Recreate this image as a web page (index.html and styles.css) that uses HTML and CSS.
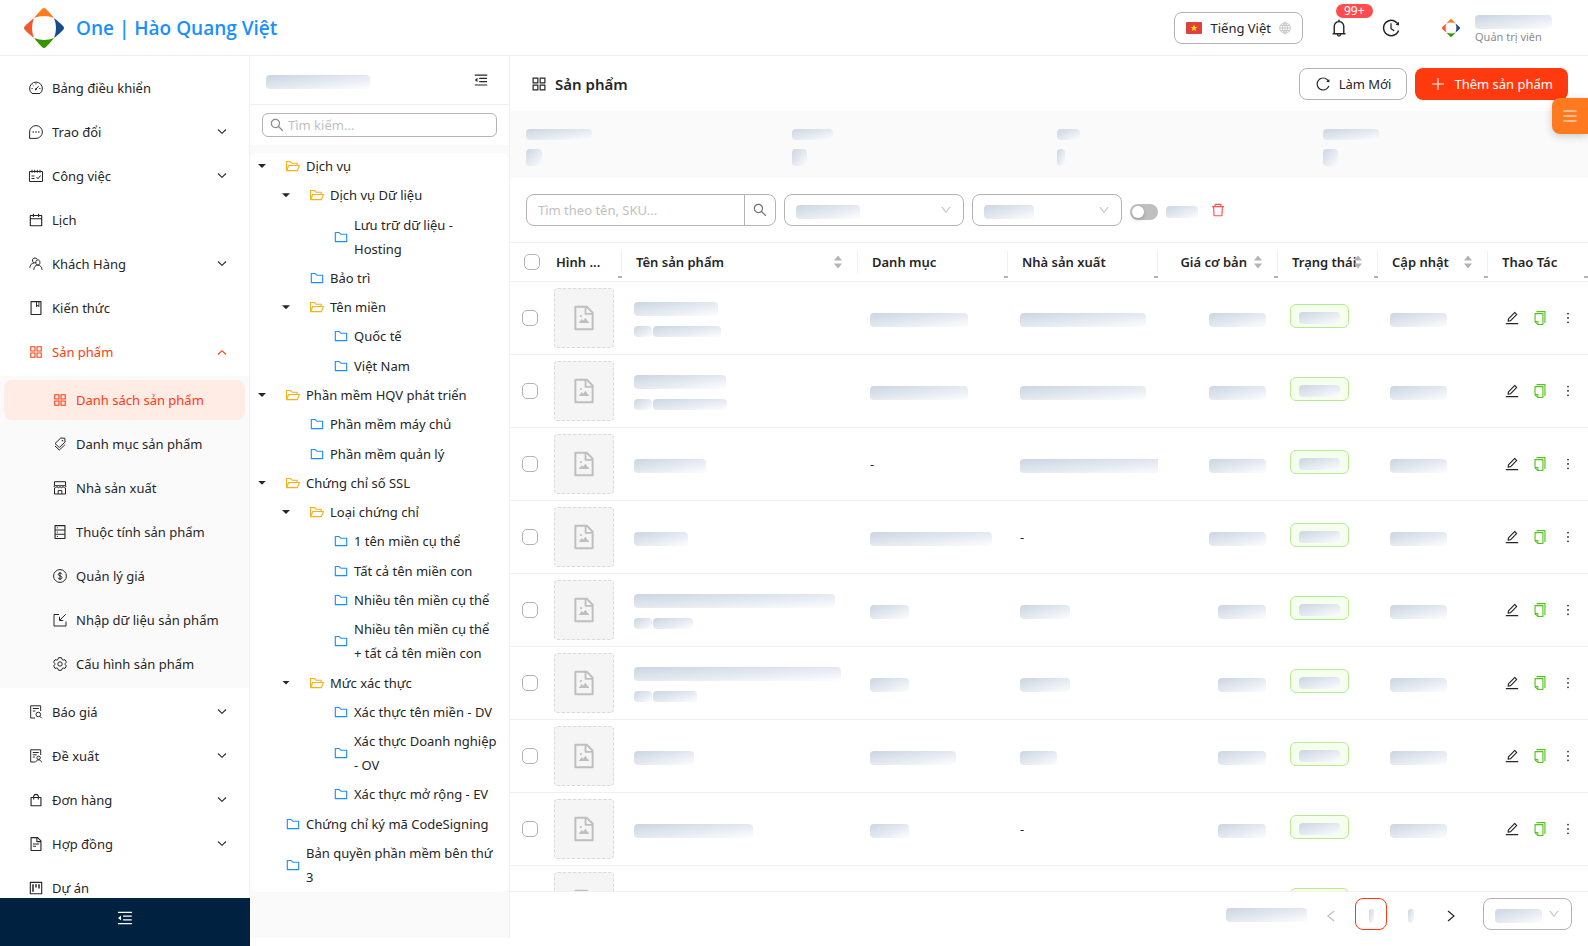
FILE: index.html
```html
<!DOCTYPE html>
<html lang="vi">
<head>
  <meta charset="UTF-8">
  <meta name="viewport" content="width=device-width, initial-scale=1.0">
  <title>Sản phẩm - One | Hào Quang Việt</title>
  <link rel="stylesheet" href="styles.css">
</head>
<body>

  <!-- Icon dùng chung -->
  <svg class="sprite" aria-hidden="true">
    <symbol id="i-logo" viewBox="0 0 40 40">
      <path fill="#ff7a1c" d="M10 10 C13 6 16 3 18 1 Q20 -1 22 1 C24 3 27 6 30 10 Q20 6 10 10Z"/>
      <path fill="#1b4b87" d="M10 10 C13 6 16 3 18 1 Q20 -1 22 1 C24 3 27 6 30 10 Q20 6 10 10Z" transform="rotate(90 20 20)"/>
      <path fill="#379300" d="M10 10 C13 6 16 3 18 1 Q20 -1 22 1 C24 3 27 6 30 10 Q20 6 10 10Z" transform="rotate(180 20 20)"/>
      <path fill="#f4582e" d="M10 10 C13 6 16 3 18 1 Q20 -1 22 1 C24 3 27 6 30 10 Q20 6 10 10Z" transform="rotate(270 20 20)"/>
    </symbol>
    <symbol id="i-appstore" viewBox="0 0 1024 1024"><path d="M464 144H160c-8.800 0-16 7.200-16 16v304c0 8.800 7.200 16 16 16h304c8.800 0 16-7.200 16-16V160c0-8.800-7.200-16-16-16zm-52 268H212V212h200v200zm452-268H560c-8.800 0-16 7.200-16 16v304c0 8.800 7.200 16 16 16h304c8.800 0 16-7.200 16-16V160c0-8.800-7.200-16-16-16zm-52 268H612V212h200v200zM464 544H160c-8.800 0-16 7.200-16 16v304c0 8.800 7.200 16 16 16h304c8.800 0 16-7.200 16-16V560c0-8.800-7.200-16-16-16zm-52 268H212V612h200v200zm452-268H560c-8.800 0-16 7.200-16 16v304c0 8.800 7.200 16 16 16h304c8.800 0 16-7.200 16-16V560c0-8.800-7.200-16-16-16zm-52 268H612V612h200v200z"/></symbol>
    <symbol id="i-fold" viewBox="0 0 1024 1024"><path d="M408 442h480c4.400 0 8-3.600 8-8v-56c0-4.400-3.600-8-8-8H408c-4.400 0-8 3.600-8 8v56c0 4.400 3.600 8 8 8zm-8 204c0 4.400 3.600 8 8 8h480c4.400 0 8-3.600 8-8v-56c0-4.400-3.600-8-8-8H408c-4.400 0-8 3.600-8 8v56zm504-486H120c-4.400 0-8 3.600-8 8v56c0 4.400 3.600 8 8 8h784c4.400 0 8-3.600 8-8v-56c0-4.400-3.600-8-8-8zm0 632H120c-4.400 0-8 3.600-8 8v56c0 4.400 3.600 8 8 8h784c4.400 0 8-3.600 8-8v-56c0-4.400-3.600-8-8-8zM115.400 518.900L271.700 642c5.800 4.600 14.400.5 14.400-6.900V388.900c0-7.400-8.500-11.500-14.400-6.900L115.400 505.100a8.740 8.740 0 000 13.800z"/></symbol>
    <symbol id="i-search" viewBox="0 0 1024 1024"><path d="M909.600 854.500L649.900 594.800C690.200 542.700 712 479 712 412c0-80.200-31.300-155.400-87.900-212.100-56.600-56.700-132-87.900-212.100-87.900s-155.500 31.300-212.100 87.900C143.200 256.500 112 331.800 112 412c0 80.100 31.300 155.500 87.900 212.100C256.500 680.800 331.800 712 412 712c67 0 130.600-21.800 182.700-62l259.700 259.600a8.200 8.200 0 0011.600 0l43.600-43.500a8.200 8.200 0 000-11.600zM570.400 570.400C528 612.700 471.800 636 412 636s-116-23.300-158.400-65.600C211.300 528 188 471.800 188 412s23.300-116.100 65.600-158.400C296 211.300 352.200 188 412 188s116.100 23.200 158.400 65.600S636 352.200 636 412s-23.300 116.100-65.600 158.400z"/></symbol>
    <symbol id="i-folder" viewBox="0 0 1024 1024"><path d="M880 298.400H521L403.700 186.200a8.150 8.150 0 00-5.500-2.200H144c-17.700 0-32 14.300-32 32v592c0 17.700 14.300 32 32 32h736c17.700 0 32-14.300 32-32V330.400c0-17.700-14.300-32-32-32zM840 768H184V256h188.500l119.600 114.400H840V768z"/></symbol>
    <symbol id="i-open" viewBox="0 0 1024 1024"><path d="M928 444H820V330.400c0-17.700-14.300-32-32-32H473L355.700 186.200a8.150 8.150 0 00-5.500-2.200H96c-17.700 0-32 14.300-32 32v592c0 17.700 14.300 32 32 32h698c13 0 24.800-7.900 29.700-20l134-332c1.500-3.800 2.300-7.900 2.300-12 0-17.700-14.300-32-32-32zM136 256h188.500l119.600 114.400H748V444H238c-13 0-24.800 7.900-29.700 20L136 643.200V256zm635.300 512H159l103.300-256h612.400L771.300 768z"/></symbol>
    <symbol id="i-down" viewBox="0 0 1024 1024"><path d="M884 256h-75c-5.100 0-9.900 2.500-12.900 6.600L512 654.200 227.900 262.600c-3-4.100-7.800-6.600-12.900-6.600h-75c-6.500 0-10.300 7.400-6.500 12.700l352.600 486.100c12.800 17.600 39 17.600 51.700 0l352.600-486.100c3.900-5.300.1-12.700-6.400-12.700z"/></symbol>
    <symbol id="i-edit" viewBox="0 0 1024 1024"><path d="M257.700 752c2 0 4-.2 6-.5L431.900 722c2-.4 3.900-1.300 5.300-2.800l423.900-423.900a9.960 9.960 0 000-14.100L694.900 114.900c-1.900-1.900-4.400-2.900-7.100-2.900s-5.200 1-7.100 2.900L256.800 538.800c-1.500 1.500-2.400 3.300-2.800 5.300l-29.500 168.200a33.500 33.500 0 009.400 29.800c6.600 6.400 14.900 9.900 23.800 9.900zm67.400-174.400L687.800 215l73.300 73.300-362.700 362.600-88.900 15.700 15.600-89zM880 836H144c-17.700 0-32 14.300-32 32v36c0 4.400 3.600 8 8 8h784c4.400 0 8-3.600 8-8v-36c0-17.700-14.300-32-32-32z"/></symbol>
    <symbol id="i-copy" viewBox="0 0 1024 1024"><path d="M832 64H296c-4.400 0-8 3.600-8 8v56c0 4.400 3.600 8 8 8h496v688c0 4.400 3.600 8 8 8h56c4.400 0 8-3.600 8-8V96c0-17.700-14.300-32-32-32zM704 192H192c-17.700 0-32 14.300-32 32v530.700c0 8.500 3.400 16.600 9.400 22.600l173.300 173.300c2.200 2.200 4.700 4 7.400 5.500v1.900h4.200c3.500 1.300 7.200 2 11 2H704c17.700 0 32-14.300 32-32V224c0-17.700-14.300-32-32-32zM350 856.200L263.900 770H350v86.200zM664 888H414V746c0-22.100-17.900-40-40-40H232V264h432v624z"/></symbol>
    <symbol id="i-more" viewBox="0 0 1024 1024"><path d="M456 231a56 56 0 10112 0 56 56 0 10-112 0zm0 280a56 56 0 10112 0 56 56 0 10-112 0zm0 280a56 56 0 10112 0 56 56 0 10-112 0z"/></symbol>
    <symbol id="i-delete" viewBox="0 0 1024 1024"><path d="M360 184h-8c4.400 0 8-3.600 8-8v8h304v-8c0 4.400 3.600 8 8 8h-8v72h72v-80c0-35.300-28.700-64-64-64H352c-35.300 0-64 28.700-64 64v80h72v-72zm504 72H160c-17.700 0-32 14.300-32 32v32c0 4.400 3.600 8 8 8h60.400l24.700 523c1.600 34.100 29.800 61 63.900 61h454c34.200 0 62.300-26.800 63.900-61l24.700-523H888c4.400 0 8-3.600 8-8v-32c0-17.700-14.300-32-32-32zM731.300 840H292.700l-24.200-512h487l-24.200 512z"/></symbol>
    <symbol id="i-image" viewBox="0 0 1024 1024"><path d="M553.100 509.100l-77.800 99.200-41.100-52.400a8 8 0 00-12.600 0l-99.800 127.200a7.980 7.980 0 006.300 12.900H696c6.700 0 10.400-7.700 6.300-12.900l-136.500-174a8.100 8.100 0 00-12.700 0zM360 442a40 40 0 1080 0 40 40 0 10-80 0zm494.600-153.400L639.400 73.400c-6-6-14.100-9.400-22.600-9.400H192c-17.700 0-32 14.300-32 32v832c0 17.700 14.300 32 32 32h640c17.700 0 32-14.300 32-32V311.300c0-8.500-3.400-16.700-9.400-22.700zM790.200 326H602V137.800L790.200 326zm1.800 562H232V136h302v216a42 42 0 0042 42h216v494z"/></symbol>
    <symbol id="i-filetext" viewBox="0 0 1024 1024"><path d="M854.600 288.600L639.400 73.400c-6-6-14.100-9.400-22.600-9.400H192c-17.700 0-32 14.300-32 32v832c0 17.700 14.300 32 32 32h640c17.700 0 32-14.300 32-32V311.300c0-8.500-3.400-16.700-9.400-22.700zM790.200 326H602V137.800L790.200 326zm1.800 562H232V136h302v216a42 42 0 0042 42h216v494zM504 618H320c-4.400 0-8 3.600-8 8v48c0 4.400 3.600 8 8 8h184c4.400 0 8-3.600 8-8v-48c0-4.400-3.600-8-8-8zM312 490v48c0 4.400 3.600 8 8 8h384c4.400 0 8-3.600 8-8v-48c0-4.400-3.600-8-8-8H320c-4.400 0-8 3.600-8 8z"/></symbol>
    <symbol id="i-bag" viewBox="0 0 1024 1024"><path d="M832 312H696v-16c0-101.600-82.400-184-184-184s-184 82.400-184 184v16H192c-17.700 0-32 14.300-32 32v536c0 17.700 14.300 32 32 32h640c17.700 0 32-14.300 32-32V344c0-17.700-14.300-32-32-32zm-432-16c0-61.900 50.100-112 112-112s112 50.100 112 112v16H400v-16zm392 544H232V384h96v88c0 4.400 3.600 8 8 8h56c4.400 0 8-3.600 8-8v-88h224v88c0 4.400 3.600 8 8 8h56c4.400 0 8-3.600 8-8v-88h96v456z"/></symbol>
    <symbol id="i-calendar" viewBox="0 0 1024 1024"><path d="M880 184H712v-64c0-4.400-3.600-8-8-8h-56c-4.400 0-8 3.600-8 8v64H384v-64c0-4.400-3.600-8-8-8h-56c-4.400 0-8 3.600-8 8v64H144c-17.700 0-32 14.300-32 32v664c0 17.700 14.300 32 32 32h736c17.700 0 32-14.300 32-32V216c0-17.700-14.300-32-32-32zm-40 656H184V460h656v380zM184 392V256h128v48c0 4.400 3.600 8 8 8h56c4.400 0 8-3.600 8-8v-48h256v48c0 4.400 3.600 8 8 8h56c4.400 0 8-3.600 8-8v-48h128v136H184z"/></symbol>
    <symbol id="i-book" viewBox="0 0 1024 1024"><path d="M832 64H192c-17.700 0-32 14.300-32 32v832c0 17.700 14.300 32 32 32h640c17.700 0 32-14.300 32-32V96c0-17.700-14.300-32-32-32zm-260 72h96v209.900L621.500 312 572 347.400V136zm220 752H232V136h280v296.900c0 3.300 1 6.600 3 9.300a15.900 15.900 0 0022.300 3.700l83.800-59.900 81.400 59.400c2.700 2 6 3.100 9.400 3.100 8.800 0 16-7.200 16-16V136h64v752z"/></symbol>
    <symbol id="i-project" viewBox="0 0 1024 1024"><path d="M280 752h80c4.400 0 8-3.600 8-8V280c0-4.400-3.600-8-8-8h-80c-4.400 0-8 3.600-8 8v464c0 4.400 3.600 8 8 8zm192-280h80c4.400 0 8-3.600 8-8V280c0-4.400-3.600-8-8-8h-80c-4.400 0-8 3.600-8 8v184c0 4.400 3.600 8 8 8zm192 72h80c4.400 0 8-3.600 8-8V280c0-4.400-3.600-8-8-8h-80c-4.400 0-8 3.600-8 8v256c0 4.400 3.600 8 8 8zm216-432H144c-17.700 0-32 14.300-32 32v736c0 17.700 14.300 32 32 32h736c17.700 0 32-14.300 32-32V144c0-17.700-14.300-32-32-32zm-40 728H184V184h656v656z"/></symbol>
    <symbol id="i-database" viewBox="0 0 1024 1024"><path d="M832 64H192c-17.700 0-32 14.300-32 32v832c0 17.700 14.300 32 32 32h640c17.700 0 32-14.300 32-32V96c0-17.700-14.300-32-32-32zm-600 72h560v208H232V136zm560 480H232V408h560v208zm0 272H232V680h560v208zM304 240a40 40 0 1080 0 40 40 0 10-80 0zm0 272a40 40 0 1080 0 40 40 0 10-80 0zm0 272a40 40 0 1080 0 40 40 0 10-80 0z"/></symbol>
    <symbol id="i-bell" viewBox="0 0 1024 1024"><path d="M816 768h-24V428c0-141.100-104.300-257.700-240-277.100V112c0-22.100-17.900-40-40-40s-40 17.900-40 40v38.900c-135.700 19.400-240 136-240 277.100v340h-24c-17.700 0-32 14.300-32 32v32c0 4.400 3.600 8 8 8h216c0 61.800 50.200 112 112 112s112-50.200 112-112h216c4.400 0 8-3.600 8-8v-32c0-17.700-14.300-32-32-32zM512 888c-26.500 0-48-21.500-48-48h96c0 26.500-21.500 48-48 48zM304 768V428c0-55.600 21.600-107.800 60.900-147.100S456.400 220 512 220c55.600 0 107.800 21.600 147.100 60.900S720 372.400 720 428v340H304z"/></symbol>
    <symbol id="i-reload" viewBox="0 0 1024 1024"><path d="M909.100 209.300l-56.400 44.100C775.800 155.100 656.200 92 521.900 92 290 92 102.300 279.500 102 511.500 101.700 743.700 289.800 932 521.900 932c181.300 0 335.800-115 394.600-276.100 1.500-4.200-.7-8.900-4.900-10.300l-56.700-19.500a8 8 0 00-10.100 4.800c-1.800 5-3.800 10-5.900 14.900-17.300 41-42.100 77.800-73.700 109.400A344.770 344.770 0 01655.900 829c-42.300 17.900-87.400 27-133.800 27-46.500 0-91.500-9.100-133.800-27A341.500 341.500 0 01279 755.200a342.160 342.160 0 01-73.700-109.400c-17.900-42.400-27-87.400-27-133.900s9.100-91.500 27-133.900c17.300-41 42.100-77.800 73.700-109.400 31.600-31.600 68.400-56.400 109.300-73.800 42.300-17.900 87.400-27 133.800-27 46.500 0 91.500 9.100 133.800 27a341.500 341.500 0 01109.300 73.800c9.900 9.900 19.200 20.400 27.800 31.400l-60.200 47a8 8 0 003 14.100l175.600 43c5 1.200 9.900-2.600 9.900-7.700l.8-180.900c-.1-6.600-7.800-10.300-13-6.200z"/></symbol>
    <symbol id="i-history" viewBox="0 0 1024 1024"><path d="M536.100 273H488c-4.400 0-8 3.600-8 8v275.300c0 2.600 1.200 5 3.300 6.500l165.300 120.700c3.600 2.600 8.600 1.900 11.200-1.700l28.600-39c2.700-3.700 1.900-8.700-1.700-11.200L544.100 528.500V281c0-4.400-3.600-8-8-8zm219.800 75.200l156.800 38.300c5 1.200 9.900-2.600 9.900-7.700l.8-161.500c0-6.700-7.700-10.500-12.900-6.300L752.900 334.100a8 8 0 003 14.100zm167.700 301.100l-56.700-19.500a8 8 0 00-10.100 4.800c-1.900 5.100-3.900 10.100-6 15.100-17.800 42.100-43.300 80-75.900 112.500a353 353 0 01-112.500 75.900 352.180 352.180 0 01-137.700 27.800c-47.800 0-94.100-9.300-137.700-27.800a353 353 0 01-112.500-75.900c-32.500-32.500-58-70.400-75.900-112.500A353.440 353.440 0 01171 512c0-47.800 9.300-94.200 27.800-137.800 17.800-42.100 43.300-80 75.900-112.500a353 353 0 01112.500-75.900C430.600 167.300 477 158 524.800 158s94.100 9.300 137.700 27.800A353 353 0 01775 261.700c10.200 10.300 19.800 21 28.600 32.300l59.800-46.800C784.700 146.600 662.200 81.900 524.600 82 285 82.100 92.600 276.700 95 516.400 97.400 751.900 288.900 942 524.800 942c185.500 0 343.500-117.600 403.700-282.300 1.500-4.200-.7-8.900-4.900-10.400z"/></symbol>
    <symbol id="i-dashboard" viewBox="-1 -1 16 16"><path fill="none" stroke="currentColor" d="M3 12.500A6.400 6.400 0 1 1 11 12.500ZM7 8l2.500-2.800M2.500 7.500h1.200M10.300 7.500h1.200M7 2.200v1.200M3.600 4l.9.9"/><circle cx="6.800" cy="8.200" r="1"/></symbol>
    <symbol id="i-message" viewBox="-1 -1 16 16"><path fill="none" stroke="currentColor" d="M.6 13.400V7A6.400 6.400 0 1 1 7 13.400Z"/><circle cx="4.200" cy="7" r=".8"/><circle cx="7" cy="7" r=".8"/><circle cx="9.800" cy="7" r=".8"/></symbol>
    <symbol id="i-schedule" viewBox="-1 -1 16 16"><path fill="none" stroke="currentColor" d="M.5 2.500h13v10H.5ZM3 .8v3M5.700.8v3M8.300.8v3M11 .8v3M2.500 7h3M2.500 9.500h3M7.500 8l1.500 1.800 2.500-3.300"/></symbol>
    <symbol id="i-team" viewBox="-1 -1 16 16"><path fill="none" stroke="currentColor" d="M7 5.500a2 2 0 1 0 3.800 0 2 2 0 1 0-3.800 0M4.700 12.800C5 10 6.500 8 8.800 8s4 2 4.300 4.800M6.700 5.800A2.500 2.500 0 1 1 8.200 2.500M.8 10.800C1 8.300 2.500 6 5 6"/></symbol>
    <symbol id="i-tags" viewBox="-1 -1 16 16"><path fill="none" stroke="currentColor" d="M7.800 1l4 .3.300 3.700L6.300 10.500 2 6.500ZM2 9l4.300 4 5.600-5.200"/><circle cx="9.500" cy="3.800" r=".8"/></symbol>
    <symbol id="i-shop" viewBox="-1 -1 16 16"><path fill="none" stroke="currentColor" d="M1.500.7h11v4h-11ZM1 4.700C1 7 3.500 7.200 4 5.500c.5 1.700 2.500 1.700 3 0 .5 1.700 2.500 1.700 3 0 .5 1.700 3 1.500 3-.8M1.500 7v6h11V7M5.200 13v-3.500h3.600V13"/></symbol>
    <symbol id="i-dollar" viewBox="-1 -1 16 16"><path fill="none" stroke="currentColor" d="M.6 7a6.400 6.400 0 1 0 12.800 0A6.400 6.400 0 1 0 .6 7M8.900 5.200C8.700 3.600 5.200 3.600 5.200 5.400 5.200 7.200 9 6.500 9 8.500c0 2-3.800 2-4 .2M7 3v8"/></symbol>
    <symbol id="i-import" viewBox="-1 -1 16 16"><path fill="none" stroke="currentColor" d="M6 1.500H1v11.500h12V8.500M12.800 1.200L7 7M6.500 3.800v3.700h3.700"/></symbol>
    <symbol id="i-setting" viewBox="-1 -1 16 16"><path fill="none" stroke="currentColor" stroke-linejoin="round" d="M5.500.7h3l.5 1.700 1.200.7 1.800-.4 1.400 2.500L12.200 6.500v1.200l1.200 1.200-1.400 2.500-1.800-.4-1.200.7-.5 1.600h-3L5 11.700 3.800 11l-1.800.4L.6 8.900l1.200-1.200V6.500L.6 5.200 2 2.700l1.800.4L5 2.400Z"/><circle cx="7" cy="7" r="2.200" fill="none" stroke="currentColor"/></symbol>
    <symbol id="i-filesearch" viewBox="-1 -1 16 16"><path fill="none" stroke="currentColor" d="M6 13H1.700V.8h10V6M3.800 3.500h6M3.800 6h2.500M10.800 11.200L12.800 13.300"/><circle cx="9.300" cy="9.500" r="2.300" fill="none" stroke="currentColor"/></symbol>
    <symbol id="i-audit" viewBox="-1 -1 16 16"><path fill="none" stroke="currentColor" d="M6 13H1.700V.8h10V6M3.800 3.500h6M3.800 5.800h4M3.800 8h2M6.700 13.300c.3-3.200 5.500-3.200 5.800 0"/><circle cx="9.600" cy="8.800" r="1.700" fill="none" stroke="currentColor"/></symbol>
    <symbol id="i-global" viewBox="0 0 14 14"><path fill="none" stroke="currentColor" d="M.8 7a6.200 6.200 0 1 0 12.400 0A6.200 6.200 0 1 0 .8 7M7 .8v12.400M.8 7h12.400M1.800 4h10.400M1.800 10h10.400M7 .8c-4 3-4 9.400 0 12.400M7 .8c4 3 4 9.400 0 12.400"/></symbol>
    <symbol id="i-chevron" viewBox="0 0 10 10"><path fill="none" stroke="currentColor" stroke-width="1.100" d="M1 2.500l4 3.800 4-3.800"/></symbol>
    <symbol id="i-left" viewBox="0 0 12 12"><path fill="none" stroke="currentColor" stroke-width="1.200" d="M9 1L3 6l6 5"/></symbol>
    <symbol id="i-right" viewBox="0 0 12 12"><path fill="none" stroke="currentColor" stroke-width="1.200" d="M3 1l6 5-6 5"/></symbol>
    <symbol id="i-plus" viewBox="-1 -1 16 16"><path fill="none" stroke="currentColor" d="M7 1v12M1 7h12"/></symbol>
    <symbol id="i-menu" viewBox="-1 -1 16 16"><path fill="none" stroke="currentColor" stroke-width="1.200" d="M.5 2h13M.5 7h13M.5 12h13"/></symbol>
  </svg>

  <header class="header">
    <a class="brand" href="#">
      <svg class="brand-logo" aria-hidden="true"><use href="#i-logo"/></svg>
      <span>One | Hào Quang Việt</span>
    </a>
    <div class="header-right">
      <button type="button" class="btn lang">
        <svg class="flag" viewBox="0 0 16 12" aria-hidden="true"><rect width="16" height="12" rx="1" fill="#e0403c"/><path fill="#ffe600" d="M8 2.500l.9 2.500h2.600L9.400 6.600l.8 2.600L8 7.600 5.800 9.200l.8-2.600L4.500 5h2.600z"/></svg>
        Tiếng Việt
        <svg class="globe" aria-hidden="true"><use href="#i-global"/></svg>
      </button>
      <button type="button" class="icon-btn bell" aria-label="Thông báo">
        <svg class="icon-lg" aria-hidden="true"><use href="#i-bell"/></svg>
        <span class="badge">99+</span>
      </button>
      <button type="button" class="icon-btn history" aria-label="Lịch sử">
        <svg class="icon-lg" aria-hidden="true"><use href="#i-history"/></svg>
      </button>
      <div class="user">
        <svg class="avatar" aria-hidden="true"><use href="#i-logo"/></svg>
        <div class="user-info">
          <span class="sk" style="width: 77px"></span>
          <span class="role">Quản trị viên</span>
        </div>
      </div>
    </div>
  </header>

  <div class="layout">
    <aside class="sider">
      <nav class="menu">
        <a class="menu-item" href="#"><svg class="icon"><use href="#i-dashboard"/></svg>Bảng điều khiển</a>
        <a class="menu-item" href="#"><svg class="icon"><use href="#i-message"/></svg>Trao đổi<svg class="arrow"><use href="#i-chevron"/></svg></a>
        <a class="menu-item" href="#"><svg class="icon"><use href="#i-schedule"/></svg>Công việc<svg class="arrow"><use href="#i-chevron"/></svg></a>
        <a class="menu-item" href="#"><svg class="icon"><use href="#i-calendar"/></svg>Lịch</a>
        <a class="menu-item" href="#"><svg class="icon"><use href="#i-team"/></svg>Khách Hàng<svg class="arrow"><use href="#i-chevron"/></svg></a>
        <a class="menu-item" href="#"><svg class="icon"><use href="#i-book"/></svg>Kiến thức</a>
        <a class="menu-item active" href="#"><svg class="icon"><use href="#i-appstore"/></svg>Sản phẩm<svg class="arrow up"><use href="#i-chevron"/></svg></a>
        <div class="submenu">
          <a class="menu-item selected" href="#"><svg class="icon"><use href="#i-appstore"/></svg>Danh sách sản phẩm</a>
          <a class="menu-item" href="#"><svg class="icon"><use href="#i-tags"/></svg>Danh mục sản phẩm</a>
          <a class="menu-item" href="#"><svg class="icon"><use href="#i-shop"/></svg>Nhà sản xuất</a>
          <a class="menu-item" href="#"><svg class="icon"><use href="#i-database"/></svg>Thuộc tính sản phẩm</a>
          <a class="menu-item" href="#"><svg class="icon"><use href="#i-dollar"/></svg>Quản lý giá</a>
          <a class="menu-item" href="#"><svg class="icon"><use href="#i-import"/></svg>Nhập dữ liệu sản phẩm</a>
          <a class="menu-item" href="#"><svg class="icon"><use href="#i-setting"/></svg>Cấu hình sản phẩm</a>
        </div>
        <a class="menu-item" href="#"><svg class="icon"><use href="#i-filesearch"/></svg>Báo giá<svg class="arrow"><use href="#i-chevron"/></svg></a>
        <a class="menu-item" href="#"><svg class="icon"><use href="#i-audit"/></svg>Đề xuất<svg class="arrow"><use href="#i-chevron"/></svg></a>
        <a class="menu-item" href="#"><svg class="icon"><use href="#i-bag"/></svg>Đơn hàng<svg class="arrow"><use href="#i-chevron"/></svg></a>
        <a class="menu-item" href="#"><svg class="icon"><use href="#i-filetext"/></svg>Hợp đồng<svg class="arrow"><use href="#i-chevron"/></svg></a>
        <a class="menu-item" href="#"><svg class="icon"><use href="#i-project"/></svg>Dự án</a>
      </nav>
      <button type="button" class="sider-trigger" aria-label="Thu gọn menu"><svg class="icon-md"><use href="#i-fold"/></svg></button>
    </aside>

    <section class="panel">
      <div class="panel-head">
        <span class="sk" style="width: 104px"></span>
        <button type="button" class="icon-btn" aria-label="Thu gọn danh mục"><svg class="icon"><use href="#i-fold"/></svg></button>
      </div>
      <div class="panel-search">
        <label class="search-small">
          <svg class="icon" aria-hidden="true"><use href="#i-search"/></svg>
          <input type="text" placeholder="Tìm kiếm..." aria-label="Tìm kiếm">
        </label>
      </div>
      <ul class="tree" id="tree"></ul>
    </section>

    <main class="main">
      <div class="page-head">
        <h1><svg class="icon-md" aria-hidden="true"><use href="#i-appstore"/></svg>Sản phẩm</h1>
        <div class="actions">
          <button type="button" class="btn"><svg class="icon"><use href="#i-reload"/></svg>Làm Mới</button>
          <button type="button" class="btn primary"><svg class="icon"><use href="#i-plus"/></svg>Thêm sản phẩm</button>
        </div>
      </div>

      <div class="stats">
        <div class="stat"><span class="sk small" style="width: 66px"></span><span class="sk big" style="width: 16px"></span></div>
        <div class="stat"><span class="sk small" style="width: 41px"></span><span class="sk big" style="width: 15px"></span></div>
        <div class="stat"><span class="sk small" style="width: 23px"></span><span class="sk big" style="width: 8px"></span></div>
        <div class="stat"><span class="sk small" style="width: 56px"></span><span class="sk big" style="width: 15px"></span></div>
      </div>

      <div class="filters">
        <div class="search-group">
          <input type="text" placeholder="Tìm theo tên, SKU..." aria-label="Tìm theo tên, SKU">
          <button type="button" aria-label="Tìm"><svg class="icon"><use href="#i-search"/></svg></button>
        </div>
        <div class="select category">
          <select aria-label="Danh mục"><option></option></select>
          <span class="sk" style="width: 64px"></span>
          <svg class="select-arrow"><use href="#i-down"/></svg>
        </div>
        <div class="select maker">
          <select aria-label="Nhà sản xuất"><option></option></select>
          <span class="sk" style="width: 50px"></span>
          <svg class="select-arrow"><use href="#i-down"/></svg>
        </div>
        <div class="toggle">
          <input type="checkbox" class="switch" aria-label="Bộ lọc">
          <span class="sk mid" style="width: 32px"></span>
        </div>
        <button type="button" class="icon-btn danger" aria-label="Xóa"><svg class="icon"><use href="#i-delete"/></svg></button>
      </div>

      <div class="table-wrap">
        <table>
          <colgroup>
            <col class="c-check"><col class="c-image"><col><col class="c-cat"><col class="c-cat">
            <col class="c-price"><col class="c-status"><col class="c-date"><col class="c-act">
          </colgroup>
          <thead>
            <tr>
              <th class="th-check"><input type="checkbox" class="check" aria-label="Chọn tất cả"></th>
              <th class="grip">Hình ...</th>
              <th><div class="th-sort">Tên sản phẩm<span class="sorter"></span></div></th>
              <th class="grip">Danh mục</th>
              <th class="grip">Nhà sản xuất</th>
              <th class="grip"><div class="th-sort right">Giá cơ bản<span class="sorter"></span></div></th>
              <th class="grip"><div class="th-sort tight">Trạng thái<span class="sorter"></span></div></th>
              <th class="grip"><div class="th-sort">Cập nhật<span class="sorter"></span></div></th>
              <th class="grip last">Thao Tác</th>
            </tr>
          </thead>
          <tbody id="rows"></tbody>
        </table>
      </div>

      <div class="pager">
        <span class="sk total" style="width: 81px"></span>
        <button type="button" class="page disabled" aria-label="Trang trước"><svg class="page-arrow"><use href="#i-left"/></svg></button>
        <button type="button" class="page current" aria-label="Trang 1"><span class="sk" style="width: 5px"></span></button>
        <button type="button" class="page" aria-label="Trang 2"><span class="sk" style="width: 6px"></span></button>
        <button type="button" class="page" aria-label="Trang sau"><svg class="page-arrow"><use href="#i-right"/></svg></button>
        <div class="select size">
          <select aria-label="Số dòng mỗi trang"><option></option></select>
          <span class="sk" style="width: 47px"></span>
          <svg class="select-arrow"><use href="#i-down"/></svg>
        </div>
      </div>
    </main>
  </div>

  <button type="button" class="float-btn" aria-label="Mở menu nhanh"><svg class="icon"><use href="#i-menu"/></svg></button>

  <script>
    // [cấp, có mục con, tên]
    const tree = [
      [0, 1, "Dịch vụ"],
      [1, 1, "Dịch vụ Dữ liệu"],
      [2, 0, "Lưu trữ dữ liệu - Hosting"],
      [1, 0, "Bảo trì"],
      [1, 1, "Tên miền"],
      [2, 0, "Quốc tế"],
      [2, 0, "Việt Nam"],
      [0, 1, "Phần mềm HQV phát triển"],
      [1, 0, "Phần mềm máy chủ"],
      [1, 0, "Phần mềm quản lý"],
      [0, 1, "Chứng chỉ số SSL"],
      [1, 1, "Loại chứng chỉ"],
      [2, 0, "1 tên miền cụ thể"],
      [2, 0, "Tất cả tên miền con"],
      [2, 0, "Nhiều tên miền cụ thể"],
      [2, 0, "Nhiều tên miền cụ thể + tất cả tên miền con"],
      [1, 1, "Mức xác thực"],
      [2, 0, "Xác thực tên miền - DV"],
      [2, 0, "Xác thực Doanh nghiệp - OV"],
      [2, 0, "Xác thực mở rộng - EV"],
      [0, 0, "Chứng chỉ ký mã CodeSigning"],
      [0, 0, "Bản quyền phần mềm bên thứ 3"]
    ];

    // độ rộng: tên, sku, danh mục, nhà sản xuất, giá (0 = để trống)
    const rows = [
      [84, 68, 98, 126, 57],
      [92, 74, 98, 126, 57],
      [72, 0, 0, 160, 57],
      [54, 0, 122, 0, 57],
      [201, 40, 39, 50, 48],
      [207, 44, 39, 50, 48],
      [60, 0, 86, 37, 48],
      [119, 0, 39, 0, 48],
      [119, 0, 39, 50, 48]
    ];

    function icon(name, cls) {
      return `<svg class="${cls}" aria-hidden="true"><use href="#i-${name}"/></svg>`;
    }

    function bar(width, cls = "") {
      return width ? `<span class="sk ${cls}" style="width: ${width}px"></span>` : "-";
    }

    document.getElementById("tree").innerHTML = tree.map(([level, open, name]) => `
      <li class="node level-${level}">
        <span class="${open ? "caret" : "caret hidden"}"></span>
        ${icon(open ? "open" : "folder", open ? "icon folder-open" : "icon folder")}
        <span>${name}</span>
      </li>`).join("");

    document.getElementById("rows").innerHTML = rows.map(([name, sku, cat, maker, price], i) => `
      <tr>
        <td class="td-check"><input type="checkbox" class="check" aria-label="Chọn dòng ${i + 1}"></td>
        <td><div class="thumb">${icon("image", "icon-xl")}</div></td>
        <td>${bar(name, sku ? "name" : "")}${sku ? `<div class="sku">${bar(18, "tiny")}${bar(sku, "tiny")}</div>` : ""}</td>
        <td>${bar(cat)}</td>
        <td>${bar(maker)}</td>
        <td class="td-right">${bar(price)}</td>
        <td><span class="tag">${bar(41, "mid")}</span></td>
        <td>${bar(57)}</td>
        <td><div class="row-actions">
          <button type="button" class="icon-btn" aria-label="Sửa">${icon("edit", "icon")}</button>
          <button type="button" class="icon-btn success" aria-label="Sao chép">${icon("copy", "icon")}</button>
          <button type="button" class="icon-btn" aria-label="Thêm">${icon("more", "icon")}</button>
        </div></td>
      </tr>`).join("");
  </script>
</body>
</html>
```
FILE: styles.css
```css
* {
  box-sizing: border-box;
}

body {
  margin: 0;
  height: 100vh;
  display: flex;
  flex-direction: column;
  overflow: hidden;
  background: #fff;
  color: #262626;
  font-family: "Noto Sans", "Open Sans", sans-serif;
  font-size: 13px;
  line-height: 24px;
}

a {
  color: inherit;
  text-decoration: none;
}

button,
input,
select {
  font: inherit;
  color: inherit;
}

button {
  padding: 0;
  border: 0;
  background: none;
  cursor: pointer;
}

input::placeholder {
  color: #bfbfbf;
  opacity: 1;
}

svg {
  display: block;
  flex: none;
  fill: currentColor;
}

.sprite {
  display: none;
}

.icon {
  width: 16px;
  height: 16px;
}

.icon-md {
  width: 18px;
  height: 18px;
}

.icon-lg {
  width: 20px;
  height: 20px;
}

.icon-xl {
  width: 28px;
  height: 28px;
}

/* thanh giữ chỗ */
.sk {
  display: block;
  flex: none;
  height: 14px;
  border-radius: 4px;
  background: linear-gradient(to bottom right, #cbd5e1, #fcfdff);
}

.sk.tiny,
.sk.small {
  height: 11px;
}

.sk.mid {
  height: 12px;
}

.sk.big {
  height: 17px;
}

/* header */
.header {
  flex: none;
  display: flex;
  align-items: center;
  justify-content: space-between;
  height: 56px;
  padding: 0 36px 0 24px;
  border-bottom: 1px solid #f0f0f0;
}

.brand {
  display: flex;
  align-items: center;
  gap: 12px;
  color: #1890ff;
  font-family: "Open Sans", "Noto Sans", sans-serif;
  font-size: 19px;
  font-weight: 600;
}

.brand-logo {
  width: 40px;
  height: 40px;
}

.header-right {
  display: flex;
  align-items: center;
}

.btn {
  display: flex;
  align-items: center;
  gap: 8px;
  height: 32px;
  padding: 0 15px;
  border: 1px solid #b3b3b3;
  border-radius: 8px;
  background: #fff;
}

.lang {
  padding: 0 11px;
}

.flag {
  width: 16px;
  height: 12px;
}

.globe {
  width: 12px;
  height: 12px;
  color: #bfbfbf;
}

.icon-btn {
  display: flex;
  align-items: center;
  justify-content: center;
}

.bell {
  position: relative;
  margin-left: 26px;
}

.badge {
  position: absolute;
  top: -14px;
  left: 7px;
  padding: 0 8px;
  border-radius: 8px;
  background: #ff4d4f;
  color: #fff;
  font-size: 12px;
  line-height: 14px;
}

.history {
  margin-left: 32px;
}

.user {
  display: flex;
  align-items: center;
  gap: 15px;
  margin-left: 41px;
}

.user-info {
  padding-top: 4px;
}

.avatar {
  width: 18px;
  height: 18px;
}

.role {
  display: block;
  color: #8c8c8c;
  font-size: 11px;
  line-height: 16px;
}

.layout {
  flex: 1;
  min-height: 0;
  display: flex;
}

/* menu trái */
.sider {
  flex: none;
  width: 250px;
  display: flex;
  flex-direction: column;
}

.menu {
  flex: 1;
  min-height: 0;
  overflow: hidden;
  padding-top: 12px;
  border-right: 1px solid #f0f0f0;
}

.menu-item {
  display: flex;
  align-items: center;
  gap: 8px;
  height: 40px;
  margin: 0 4px 4px;
  padding: 0 18px 0 24px;
  border-radius: 8px;
}

.arrow {
  width: 10px;
  height: 10px;
  margin-left: auto;
}

.arrow.up {
  transform: rotate(180deg);
}

.menu-item.active {
  color: #ff3a0f;
}

.submenu {
  margin-bottom: 4px;
  padding: 4px 0;
  background: #fafafa;
}

.submenu .menu-item {
  padding-left: 48px;
}

.submenu .menu-item:last-child {
  margin-bottom: 0;
}

.menu-item.selected {
  background: #ffece5;
  color: #ff3a0f;
}

.sider-trigger {
  flex: none;
  display: flex;
  justify-content: center;
  height: 48px;
  padding-top: 11px;
  background: #00213f;
  color: #fff;
}

/* cây danh mục */
.panel {
  flex: none;
  width: 260px;
  display: flex;
  flex-direction: column;
  margin-bottom: 8px;
  padding-bottom: 46px;
  border-right: 1px solid #f0f0f0;
  background: #fafafa;
}

.panel-head {
  display: flex;
  justify-content: space-between;
  height: 49px;
  padding: 16px 20px 0 16px;
  border-bottom: 1px solid #f0f0f0;
  background: #fff;
}

.panel-head .sk {
  margin-top: 3px;
}

.panel-head .icon-btn {
  height: 16px;
}

.panel-search {
  padding: 8px 12px;
  background: #fff;
}

.search-small {
  display: flex;
  align-items: center;
  gap: 3px;
  height: 24px;
  padding: 0 6px;
  border: 1px solid #b3b3b3;
  border-radius: 6px;
  color: #8c8c8c;
}

.search-small input {
  flex: 1;
  min-width: 0;
  height: 22px;
  padding: 0;
  border: 0;
  outline: 0;
  background: none;
}

.tree {
  flex: 1;
  min-height: 0;
  display: flex;
  flex-direction: column;
  justify-content: space-between;
  margin: 8px 0 0;
  padding: 1px 10px 3px 0;
  border-radius: 8px;
  background: #fff;
  list-style: none;
}

.node {
  display: flex;
  align-items: center;
  gap: 5px;
}

.node.level-1 {
  padding-left: 24px;
}

.node.level-2 {
  padding-left: 48px;
}

.caret {
  flex: none;
  width: 8px;
  height: 4px;
  margin: 0 14px 0 8px;
  background: #262626;
  clip-path: polygon(0 0, 100% 0, 50% 100%);
}

.caret.hidden {
  visibility: hidden;
}

.folder {
  color: #1890ff;
}

.folder-open {
  color: #faad14;
}

/* nội dung */
.main {
  flex: 1;
  min-width: 0;
  display: flex;
  flex-direction: column;
  padding-bottom: 8px;
}

.page-head {
  display: flex;
  align-items: center;
  justify-content: space-between;
  height: 55px;
  padding: 0 20px;
}

.page-head h1 {
  display: flex;
  align-items: center;
  gap: 7px;
  margin: 0;
  font-size: 15px;
  font-weight: 600;
}

.actions {
  display: flex;
  gap: 8px;
}

.btn.primary {
  border: 0;
  background: #ff3a0f;
  color: #fff;
}

.stats {
  display: grid;
  grid-template-columns: repeat(4, 1fr);
  gap: 16px;
  height: 67px;
  padding: 18px 16px 0;
  background: #fafafa;
}

.stat {
  display: flex;
  flex-direction: column;
  gap: 9px;
}

.filters {
  display: flex;
  align-items: center;
  gap: 8px;
  height: 64px;
  padding: 0 16px;
}

.search-group {
  display: flex;
  width: 250px;
  height: 32px;
  border: 1px solid #b3b3b3;
  border-radius: 8px;
}

.search-group input {
  flex: 1;
  min-width: 0;
  padding: 0 11px;
  border: 0;
  outline: 0;
  background: none;
}

.search-group button {
  display: flex;
  align-items: center;
  justify-content: center;
  width: 31px;
  border-left: 1px solid #b3b3b3;
  color: #737373;
}

.select {
  display: grid;
  grid-template-columns: 1fr auto;
  align-items: center;
  height: 32px;
  padding: 0 11px;
  border: 1px solid #b3b3b3;
  border-radius: 8px;
}

.select select {
  grid-area: 1 / 1 / 2 / 3;
  width: 100%;
  height: 30px;
  border: 0;
  outline: 0;
  background: none;
  appearance: none;
}

.select .sk {
  grid-area: 1 / 1;
  margin-top: 4px;
  pointer-events: none;
}

.select-arrow {
  grid-area: 1 / 2;
  width: 12px;
  height: 12px;
  color: #bfbfbf;
  pointer-events: none;
}

.category {
  width: 180px;
}

.maker {
  width: 150px;
}

.size {
  width: 89px;
  margin-left: 8px;
}

.toggle {
  display: flex;
  align-items: center;
  gap: 8px;
  padding-top: 4px;
}

.switch {
  appearance: none;
  width: 28px;
  height: 16px;
  margin: 0;
  padding: 2px;
  border-radius: 8px;
  background: #bfbfbf;
}

.switch::before {
  content: "";
  display: block;
  width: 12px;
  height: 12px;
  border-radius: 50%;
  background: #fff;
  box-shadow: 0 2px 4px rgba(0, 35, 11, 0.2);
}

.danger {
  margin-left: 4px;
  color: #ff4d4f;
}

/* bảng sản phẩm */
.table-wrap {
  flex: 1;
  min-height: 0;
  overflow: hidden;
  border-top: 1px solid #f0f0f0;
}

table {
  width: 100%;
  border-collapse: separate;
  border-spacing: 0;
  table-layout: fixed;
}

.c-check { width: 32px; }
.c-image { width: 80px; }
.c-cat { width: 150px; }
.c-price { width: 120px; }
.c-status { width: 100px; }
.c-date { width: 110px; }
.c-act { width: 100px; }

th {
  position: relative;
  height: 39px;
  padding: 0 16px 0 14px;
  border-bottom: 1px solid #f0f0f0;
  font-weight: 600;
  text-align: left;
  white-space: nowrap;
}

th::before {
  content: "";
  position: absolute;
  top: 8px;
  right: 0;
  width: 1px;
  height: 22px;
  background: #f0f0f0;
}

th.th-check::before,
th.last::before {
  display: none;
}

.grip::after {
  content: "";
  position: absolute;
  right: 0;
  bottom: 3px;
  width: 4px;
  height: 2px;
  background: #b3b3b3;
}

.th-sort {
  display: flex;
  align-items: center;
  justify-content: space-between;
}

.th-sort.right {
  justify-content: flex-end;
  gap: 7px;
}

.th-sort.tight .sorter {
  margin-left: -6px;
}

.sorter {
  flex: none;
  width: 8px;
  height: 13px;
  background: #b3b3b3;
  clip-path: polygon(50% 0, 100% 38%, 0 38%, 0 62%, 100% 62%, 50% 100%, 0 62%, 0 38%);
}

td {
  height: 73px;
  padding: 0 12px;
  border-bottom: 1px solid #f0f0f0;
  overflow: hidden;
}

th.th-check {
  padding: 0 0 0 14px;
}

td.td-check {
  padding: 0 0 0 12px;
}

td > .sk {
  margin-top: 4px;
}

td > .sk.name {
  margin-top: 3px;
}

.td-right .sk {
  margin-left: auto;
}

td:nth-child(5) {
  padding-right: 0;
}

.check {
  appearance: none;
  display: block;
  width: 16px;
  height: 16px;
  margin: 0;
  border: 1px solid #b3b3b3;
  border-radius: 5px;
  background: #fff;
}

.thumb {
  display: flex;
  align-items: center;
  justify-content: center;
  width: 60px;
  height: 60px;
  border: 1px dashed #d9d9d9;
  border-radius: 4px;
  background: #f5f5f5;
  color: #bfbfbf;
}

.sku {
  display: flex;
  gap: 1px;
  margin-top: 10px;
}

.tag {
  display: inline-flex;
  align-items: center;
  height: 24px;
  margin-bottom: 4px;
  padding: 0 8px;
  border: 1px solid #b7eb8f;
  border-radius: 6px;
  background: #f6ffed;
  vertical-align: middle;
}

.tag .sk {
  margin-top: 4px;
}

.row-actions {
  display: flex;
  gap: 12px;
  padding-left: 4px;
}

.success {
  color: #52c41a;
}

/* phân trang */
.pager {
  flex: none;
  display: flex;
  align-items: center;
  justify-content: flex-end;
  gap: 8px;
  height: 47px;
  padding: 0 16px 2px;
  border-top: 1px solid #f0f0f0;
}

.pager .total {
  margin-top: 2px;
}

.page {
  display: flex;
  align-items: center;
  justify-content: center;
  width: 32px;
  height: 32px;
  border-radius: 8px;
}

.page .sk {
  margin-top: 4px;
}

.page.current {
  border: 1px solid #ff3a0f;
}

.page.disabled {
  color: #bfbfbf;
}

.page-arrow {
  width: 12px;
  height: 12px;
  margin-top: 4px;
}

.float-btn {
  position: fixed;
  top: 98px;
  right: 0;
  display: flex;
  align-items: center;
  justify-content: center;
  width: 36px;
  height: 36px;
  border-radius: 8px 0 0 8px;
  background: #ff7a1f;
  color: #fff;
  box-shadow: 0 2px 8px rgba(0, 0, 0, 0.2);
}
```
